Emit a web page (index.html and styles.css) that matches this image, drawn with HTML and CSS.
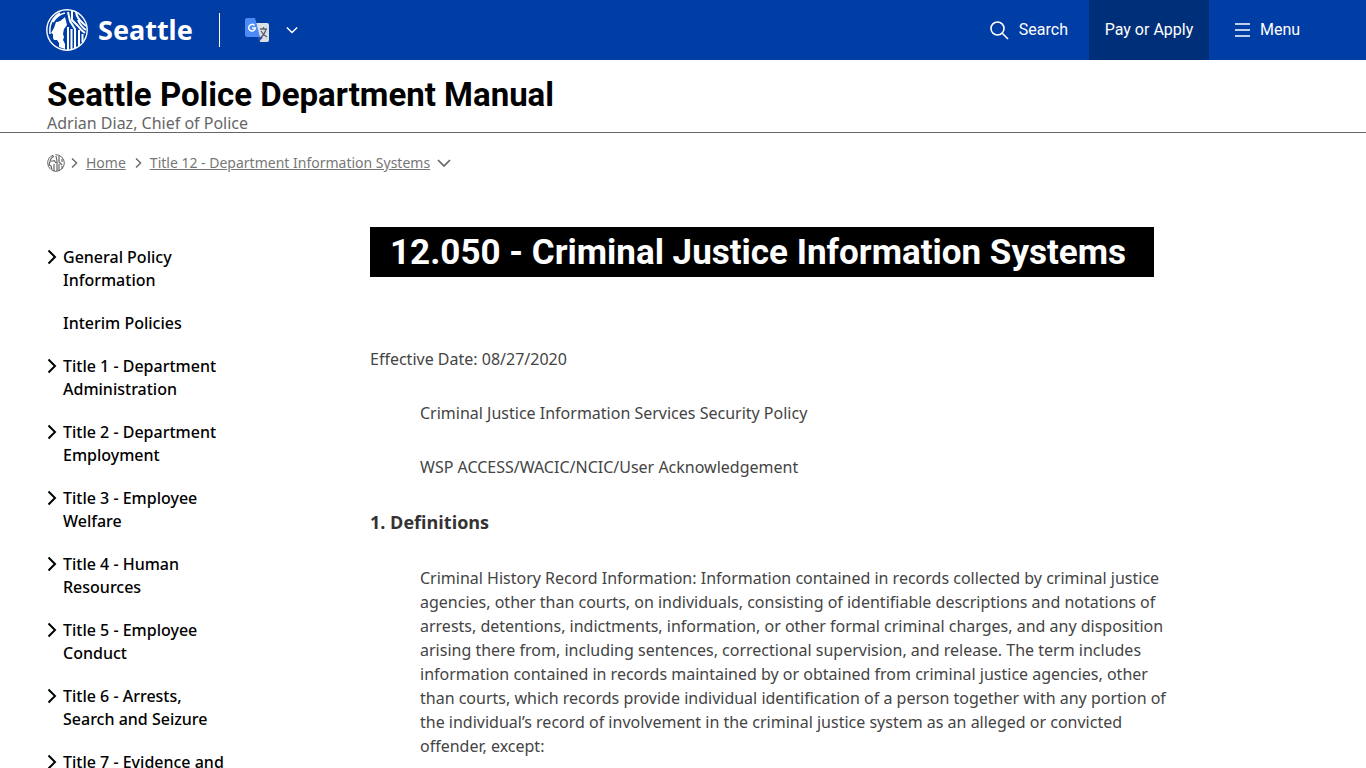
FILE: index.html
```html
<!DOCTYPE html>
<html lang="en">
<head>
    <meta charset="UTF-8">
    <meta name="viewport" content="width=device-width, initial-scale=1.0">
    <title>12.050 - Criminal Justice Information Systems</title>
    <link rel="stylesheet" href="styles.css">
</head>
<body>
    <svg class="defs" aria-hidden="true">
        <symbol id="seal" viewBox="0 0 42 42">
            <circle cx="21" cy="21" r="20.200" fill="none" stroke="currentColor" stroke-width="1.400"/>
            <path fill="currentColor" d="M10 13c3 0 6-2 9-5l2 8-3 4-1 5 1 3-1 3 2 4v5l-6-2v-4l-2-3H8l-1-2v-4l-2-1 3-5z"/>
            <g fill="none" stroke="currentColor" stroke-width="1.500">
                <path d="M4 25C3 15 7 8 14 4M7 13C10 8 14 5 19 4"/>
            </g>
            <g fill="none" stroke="currentColor" stroke-width="2">
                <path d="M22 3l2 9 5 8v19M26 2v9l6 6M30 3c1 7 5 9 10 14M32 11c2 5 5 8 8 10M32 17c2 3 4 5 7 7"/>
                <path d="M22 18v23M25.500 20v20M33 21v16M36.500 25v8"/>
            </g>
        </symbol>
        <symbol id="seal-small" viewBox="0 0 18 18">
            <circle cx="9" cy="9" r="8.300" fill="none" stroke="currentColor" stroke-width="1" stroke-dasharray="17 2"/>
            <g fill="none" stroke="currentColor" stroke-width="1.200">
                <path d="M7 2C4 4 3 6 3 8l-1 3 2 1 1 4M4 7h3M7 10v7M9 2l1 5v10M12 2v6l3 3M12 10v7M15 5v3M15 12v3M7 6l2 3"/>
            </g>
        </symbol>
        <symbol id="chevron" viewBox="0 0 10 16">
            <path d="M1.500 1.500L8 8l-6.500 6.500" fill="none" stroke="currentColor" stroke-width="2"/>
        </symbol>
        <symbol id="down" viewBox="0 0 14 8">
            <path d="M1 1l6 6 6-6" fill="none" stroke="currentColor" stroke-width="1.700"/>
        </symbol>
    </svg>

    <header class="topbar">
        <a class="brand" href="#">
            <svg class="logo"><use href="#seal"/></svg>
            <span>Seattle</span>
        </a>
        <button class="translate" aria-label="Translate">
            <svg class="translate-icon" viewBox="0 0 24 24">
                <path d="M11 5h11q2 0 2 2v15q0 2-2 2h-7z" fill="#dcdfe3"/>
                <path d="M13 19h5l-4 5z" fill="#2b4fb0"/>
                <path d="M2 0h8l5 19H2q-2 0-2-2V2q0-2 2-2z" fill="#4e8af4"/>
                <path d="M9.500 7.500A3.300 3.300 0 1 0 10.300 10H7" fill="none" stroke="#fff" stroke-width="1.500"/>
                <path d="M15 11h7M18.500 9v2M21 11q-1 5-5 8M16 13q2 4 6 6" fill="none" stroke="#5d6670" stroke-width="1.300"/>
            </svg>
            <svg class="down-icon"><use href="#down"/></svg>
        </button>
        <nav class="actions">
            <button class="action search">
                <svg class="search-icon" viewBox="0 0 19 19" fill="none" stroke="currentColor" stroke-width="1.600"><circle cx="7.500" cy="7.500" r="6.500"/><path d="M12 12l6 6"/></svg>
                Search
            </button>
            <a class="action pay" href="#">Pay or Apply</a>
            <button class="action menu">
                <svg class="menu-icon" viewBox="0 0 15 14" stroke="currentColor" stroke-width="1.500"><path d="M0 1h15M0 7h15M0 13h15"/></svg>
                Menu
            </button>
        </nav>
    </header>

    <div class="site-title">
        <h2>Seattle Police Department Manual</h2>
        <p>Adrian Diaz, Chief of Police</p>
    </div>

    <nav class="breadcrumb" aria-label="Breadcrumb">
        <svg class="crumb-seal"><use href="#seal-small"/></svg>
        <svg class="crumb-chevron"><use href="#chevron"/></svg>
        <a href="#">Home</a>
        <svg class="crumb-chevron"><use href="#chevron"/></svg>
        <a href="#">Title 12 - Department Information Systems</a>
        <svg class="crumb-down"><use href="#down"/></svg>
    </nav>

    <div class="layout">
        <nav class="sidebar" aria-label="Manual">
            <ul>
                <li><svg><use href="#chevron"/></svg><a href="#">General Policy Information</a></li>
                <li><a href="#">Interim Policies</a></li>
                <li><svg><use href="#chevron"/></svg><a href="#">Title 1 - Department Administration</a></li>
                <li><svg><use href="#chevron"/></svg><a href="#">Title 2 - Department Employment</a></li>
                <li><svg><use href="#chevron"/></svg><a href="#">Title 3 - Employee Welfare</a></li>
                <li><svg><use href="#chevron"/></svg><a href="#">Title 4 - Human Resources</a></li>
                <li><svg><use href="#chevron"/></svg><a href="#">Title 5 - Employee Conduct</a></li>
                <li><svg><use href="#chevron"/></svg><a href="#">Title 6 - Arrests, Search and Seizure</a></li>
                <li><svg><use href="#chevron"/></svg><a href="#">Title 7 - Evidence and</a></li>
            </ul>
        </nav>

        <main class="content">
            <h1>12.050 - Criminal Justice Information Systems</h1>
            <p>Effective Date: 08/27/2020</p>
            <p class="indent">Criminal Justice Information Services Security Policy</p>
            <p class="indent">WSP ACCESS/WACIC/NCIC/User Acknowledgement</p>
            <h3>1. Definitions</h3>
            <p class="indent">Criminal History Record Information: Information contained in records collected by criminal justice agencies, other than courts, on individuals, consisting of identifiable descriptions and notations of arrests, detentions, indictments, information, or other formal criminal charges, and any disposition arising there from, including sentences, correctional supervision, and release. The term includes information contained in records maintained by or obtained from criminal justice agencies, other than courts, which records provide individual identification of a person together with any portion of the individual’s record of involvement in the criminal justice system as an alleged or convicted offender, except:</p>
        </main>
    </div>
</body>
</html>
```

FILE: styles.css
```css
* {
    box-sizing: border-box;
}
body {
    margin: 0;
    font-family: "Noto Sans", sans-serif;
    font-size: 16px;
    line-height: 24px;
    color: #444;
    background: white;
}
h1, h2, h3, p, ul {
    margin: 0;
    padding: 0;
}
button {
    border: none;
    background: none;
    padding: 0;
    color: inherit;
    font: inherit;
    cursor: pointer;
}
.defs {
    display: none;
}

/* blue bar */
.topbar {
    display: flex;
    align-items: center;
    height: 60px;
    padding: 0 46px;
    background: #003da5;
    color: white;
}
.brand {
    display: flex;
    align-items: center;
    gap: 10px;
    padding-right: 26px;
    border-right: 1px solid white;
    height: 34px;
    color: white;
    text-decoration: none;
    font-size: 27px;
    font-weight: 700;
}
.logo {
    width: 42px;
    height: 42px;
}
.translate {
    display: flex;
    align-items: center;
    gap: 17px;
    margin-left: 25px;
}
.translate-icon {
    width: 24px;
    height: 24px;
}
.down-icon {
    width: 12px;
    height: 8px;
}
.actions {
    display: flex;
    align-self: stretch;
    margin-left: auto;
}
.action {
    display: flex;
    align-items: center;
    gap: 10px;
    color: white;
    text-decoration: none;
    font-family: Roboto, sans-serif;
    font-size: 16px;
}
.search {
    padding-right: 21px;
}
.search-icon {
    width: 19px;
    height: 19px;
}
.pay {
    justify-content: center;
    width: 120px;
    background: #002f7a;
}
.menu {
    width: 111px;
    padding-left: 26px;
}
.menu-icon {
    width: 15px;
    height: 14px;
}

.site-title {
    padding: 15px 47px 0;
    border-bottom: 1px solid #666;
}
.site-title h2 {
    font-family: Roboto, sans-serif;
    font-size: 33px;
    line-height: 39px;
    color: black;
}
.site-title p {
    line-height: 18px;
    color: #666;
}

.breadcrumb {
    display: flex;
    align-items: center;
    padding: 18px 47px 0;
    font-size: 14px;
    color: #666;
}
.breadcrumb a {
    color: #777;
}
.crumb-seal {
    width: 18px;
    height: 18px;
    margin-right: 6px;
}
.crumb-chevron {
    width: 7px;
    height: 12px;
    margin-right: 8px;
}
.breadcrumb a + .crumb-chevron {
    margin-left: 9px;
}
.crumb-down {
    width: 14px;
    height: 8px;
    margin-left: 7px;
}

.layout {
    display: grid;
    grid-template-columns: 323px 1fr;
    padding: 52px 186px 0 47px;
}
.sidebar ul {
    list-style: none;
    width: 180px;
    padding-top: 19px;
}
.sidebar li {
    display: flex;
    padding-left: 16px;
    margin-bottom: 20px;
    line-height: 23px;
}
.sidebar svg {
    flex: none;
    width: 10px;
    height: 16px;
    margin: 3px 6px 0 -16px;
    color: black;
}
.sidebar a {
    color: black;
    font-weight: 500;
    text-decoration: none;
}

.content h1 {
    width: fit-content;
    padding: 2px 28px 0 20px;
    margin-bottom: 70px;
    background: black;
    color: white;
    font-family: Roboto, sans-serif;
    font-size: 35px;
    line-height: 48px;
}
.content p {
    margin-bottom: 30px;
}
.content .indent {
    padding-left: 50px;
}
.content h3 {
    margin-bottom: 30px;
    font-family: "Open Sans", sans-serif;
    font-size: 18px;
    line-height: 27px;
    color: #333;
}
```
